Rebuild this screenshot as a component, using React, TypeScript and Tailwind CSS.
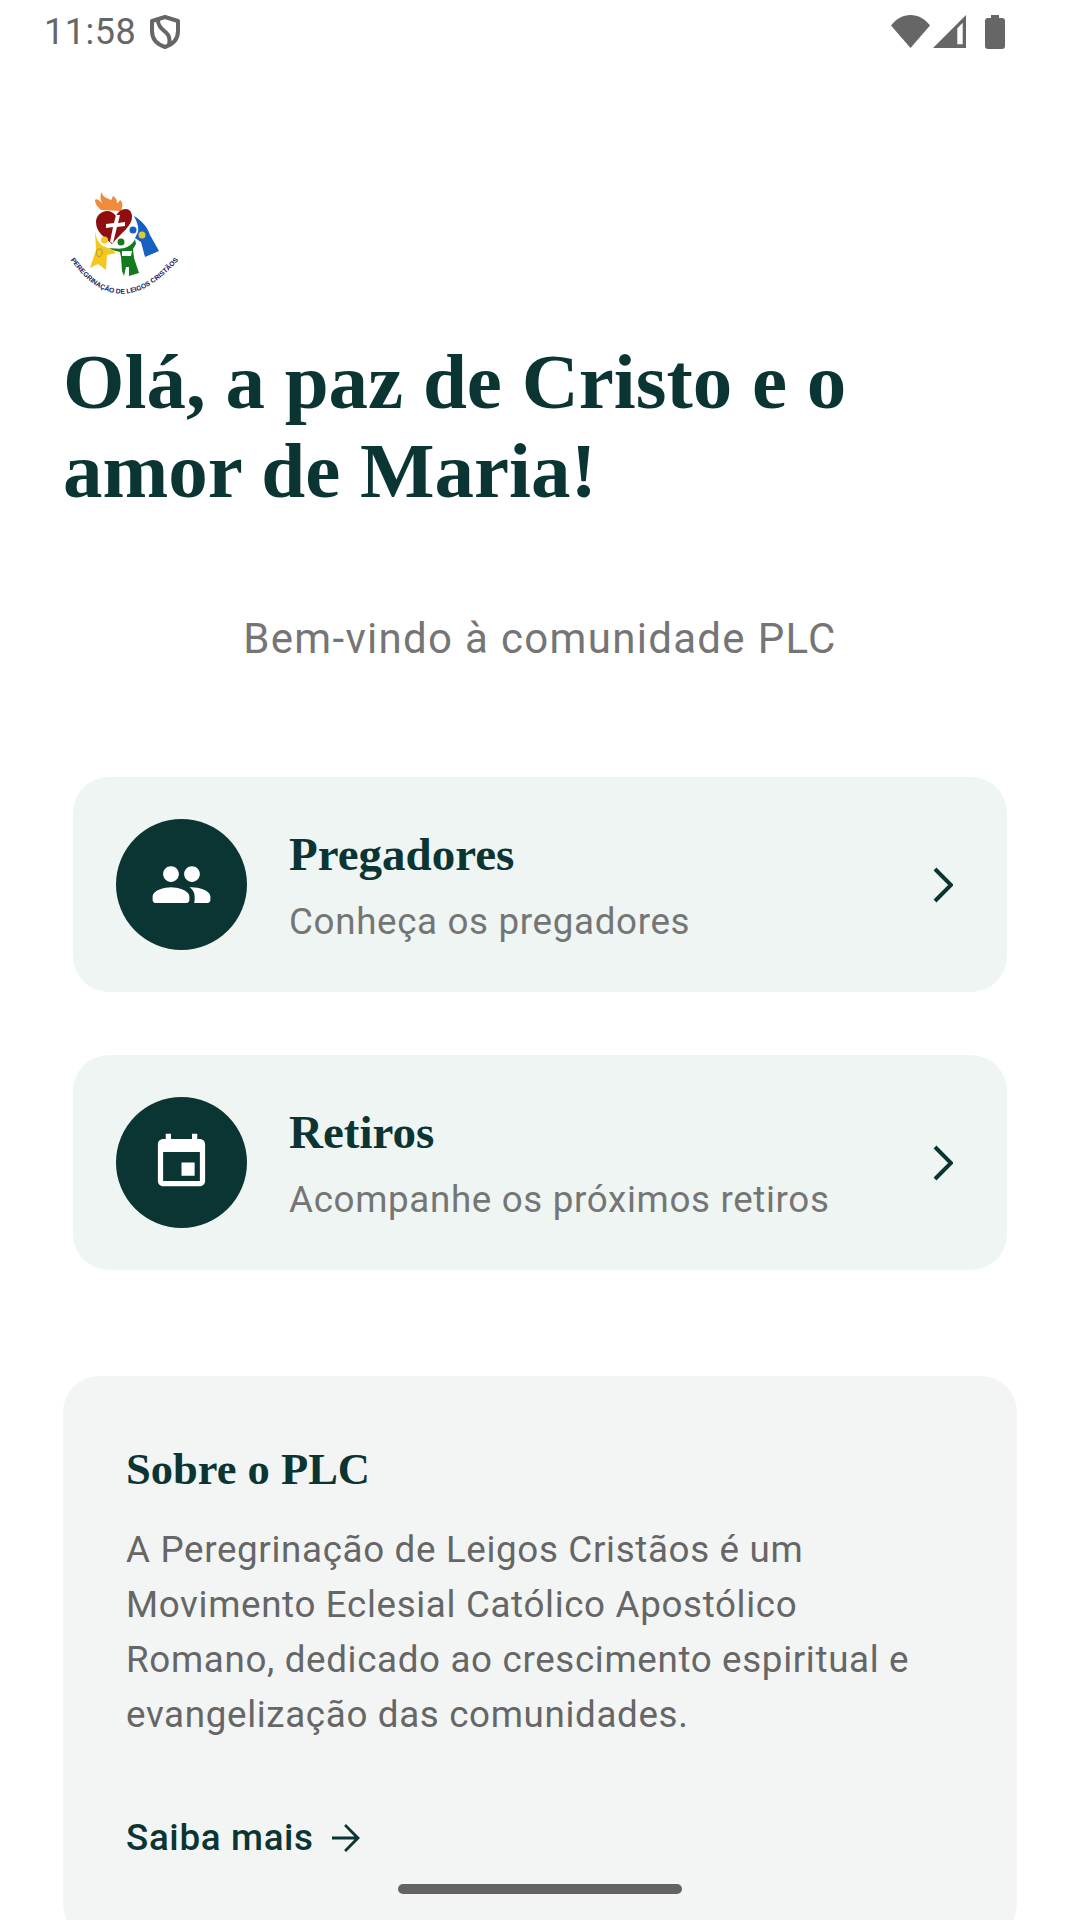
const roboto = 'font-[Roboto,sans-serif]';
const serif = "font-['Liberation_Serif',serif]";

function StatusBar() {
  return (
    <div className={`flex h-[63px] items-center justify-between pl-[44px] pr-[75px] text-[#666666] ${roboto}`}>
      <div className="flex items-center gap-[14px]">
        <span className="text-[36px] leading-none tracking-[0.5px]">11:58</span>
        <svg width="30" height="34" viewBox="0 0 30 34" fill="none" stroke="#666666" strokeWidth="4">
          <path d="M15 2 28 6V16C28 24 22.500 29.500 15 32 7.500 29.500 2 24 2 16V6Z" strokeLinejoin="round" />
          <path d="M8 4C7.500 11 12 14 15.500 17 19 20 20.500 24 19 30" />
        </svg>
      </div>
      <div className="flex items-center">
        <svg width="39" height="33" viewBox="0 0 39 33">
          <path d="M19.500 33 0 10.500C5 4 12 0 19.500 0S34 4 39 10.500Z" fill="#666666" />
        </svg>
        <svg width="33" height="33" viewBox="0 0 33 33" className="ml-[3px] mr-[19px]">
          <path fillRule="evenodd" d="M0 33 33 0V33ZM24.300 13.300V29.300H29.700V7.700Z" fill="#666666" />
        </svg>
        <svg width="20" height="34" viewBox="0 0 20 34">
          <path d="M6 0h8v3h3q3 0 3 3v25q0 3-3 3H3q-3 0-3-3V6q0-3 3-3h3Z" fill="#666666" />
        </svg>
      </div>
    </div>
  );
}

function Logo() {
  return (
    <svg width="125" height="125" viewBox="0 0 125 125" className="-ml-[3px] block">
      <defs>
        <path id="logoCurve" d="M10 79Q60 150 122 76" fill="none" />
      </defs>
      {/* flame */}
      <path d="M42 12c-3 5-1 8 0 11-3-3-6-5-7-3 0 4 3 7 6 10l20 1c2-5 2-9-1-11-1 2-2 3-3 3 0-4-2-6-4-7-1 2-1 3-2 4-4-2-9-3-9-8Z" fill="#f08a3c" />
      {/* heart */}
      <path d="M52 64C44 57 36 52 36 42c0-6 5-11 11-11 4 0 7 2 9 5 2-4 5-7 10-7 4 0 6 4 6 8 0 9-10 15-20 27Z" fill="#8f0f10" />
      <path d="M56 35h4l-2 8 7-1v4l-8 1-4 16-3-1 3-15-7 1v-4l8-1Z" fill="#ffffff" />
      {/* yellow figure */}
      <circle cx="44.500" cy="60" r="3.500" fill="#f5c61e" />
      <path d="M35 50c1 8 3 13 8 16l10 4 3 3-9 2-1 15-8-6-8 4 6-18Z" fill="#f5c61e" />
      <path d="M37 70c2-2 5-1 5 1 1 3-1 5-3 6-3-2-3-5-2-7Z" fill="none" stroke="#9a8a40" strokeWidth="0.800" />
      {/* green figure */}
      <circle cx="61" cy="62" r="3.500" fill="#137a1d" />
      <path d="M49 68c9 1 14 1 18-1 4-2 6-4 8-8l1 5-3 5 1 9 5 15-10 3 0-9-3 0-2 9-2-5-1-14-1-5c-4-1-8-2-11-4Z" fill="#137a1d" />
      <path d="M62 71 72 71 71 76 62 76Z" fill="#ffffff" />
      {/* blue figure */}
      <circle cx="73" cy="50" r="3.500" fill="#1560c0" />
      <path d="M74 36c7 4 13 10 16 19l9 16-14 6-4-15-6-4 3-6c1-5-1-10-4-16Z" fill="#1560c0" />
      <circle cx="82" cy="55" r="3.500" fill="#e0c832" />
      <text fontFamily="'Liberation Sans',sans-serif" fontSize="6.800" fontWeight="700" fill="#14185e">
        <textPath href="#logoCurve" startOffset="1">PEREGRINAÇÃO DE LEIGOS CRISTÃOS</textPath>
      </text>
    </svg>
  );
}

function MenuCard({ icon, title, subtitle }: { icon: React.ReactNode; title: string; subtitle: string }) {
  return (
    <div className="flex h-[215px] items-center rounded-[36px] bg-[#eff5f3] pl-[43px] pr-[54px]">
      <div className="flex h-[131px] w-[131px] shrink-0 items-center justify-center rounded-full bg-[#0a3533]">
        {icon}
      </div>
      <div className="ml-[42px] flex-1">
        <div className={`text-[47px] font-bold leading-[50px] text-[#0a3533] ${serif}`}>{title}</div>
        <div className={`mt-[24px] text-[36.750px] leading-[38px] tracking-[0.656px] text-[#757575] ${roboto}`}>{subtitle}</div>
      </div>
      <svg width="20" height="36" viewBox="0 0 20 36" fill="none" stroke="#0a3533" strokeWidth="4">
        <path d="M2 2 18 18 2 34" />
      </svg>
    </div>
  );
}

export default function App() {
  return (
    <div className="relative h-[1920px] w-[1080px] overflow-hidden bg-white">
      <StatusBar />
      <div className="pl-[63px] pt-[117px]">
        <Logo />
        <h1 className={`mt-[32px] text-[79px] font-bold leading-[89px] text-[#0a3533] ${serif}`}>
          Olá, a paz de Cristo e o
          <br />
          amor de Maria!
        </h1>
      </div>
      <div className={`mt-[100px] text-center text-[42px] leading-[48px] tracking-[1.312px] text-[#757575] ${roboto}`}>
        Bem-vindo à comunidade PLC
      </div>
      <div className="mt-[114px] flex flex-col gap-[63px] px-[73px]">
        <MenuCard
          title="Pregadores"
          subtitle="Conheça os pregadores"
          icon={
            <svg width="63" height="63" viewBox="0 0 24 24" fill="#ffffff">
              <path d="M16 11c1.660 0 3-1.340 3-3s-1.340-3-3-3-3 1.340-3 3 1.340 3 3 3zm-8 0c1.660 0 3-1.340 3-3S9.660 5 8 5 5 6.340 5 8s1.340 3 3 3zm0 2c-2.330 0-7 1.170-7 3.500V18c0 .550.450 1 1 1h12c.550 0 1-.450 1-1v-1.500c0-2.330-4.670-3.500-7-3.500zm8 0c-.290 0-.620.020-.970.050.020.010.030.030.040.040 1.140.830 1.930 1.940 1.930 3.410V18c0 .350-.070.690-.180 1H22c.550 0 1-.450 1-1v-1.500c0-2.330-4.670-3.500-7-3.500z" />
            </svg>
          }
        />
        <MenuCard
          title="Retiros"
          subtitle="Acompanhe os próximos retiros"
          icon={
            <svg width="63" height="63" viewBox="0 0 24 24" fill="#ffffff">
              <path d="M17 12h-5v5h5v-5zM16 1v2H8V1H6v2H5c-1.110 0-1.990.900-1.990 2L3 19c0 1.100.890 2 2 2h14c1.100 0 2-.900 2-2V5c0-1.100-.900-2-2-2h-1V1h-2zm3 18H5V8h14v11z" />
            </svg>
          }
        />
      </div>
      <div className="mx-[63px] mt-[106px] rounded-[36px] bg-[#f3f5f4] px-[63px] pb-[80px] pt-[66px]">
        <h2 className={`text-[44.500px] font-bold leading-[54px] text-[#0a3533] ${serif}`}>Sobre o PLC</h2>
        <p className={`mt-[26px] text-[36.750px] leading-[55.100px] tracking-[0.656px] text-[#666666] ${roboto}`}>
          A Peregrinação de Leigos Cristãos é um Movimento Eclesial Católico Apostólico Romano, dedicado ao crescimento espiritual e evangelização das comunidades.
        </p>
        <div className={`mt-[74px] flex items-center gap-[11px] text-[36.750px] font-medium leading-[44px] tracking-[0.656px] text-[#0a3533] ${roboto}`}>
          Saiba mais
          <svg width="42" height="42" viewBox="0 0 24 24" fill="#0a3533">
            <path d="M12 4l-1.100 1.100L16.800 11.200H4v1.600h12.800l-5.900 6.100L12 20l8-8z" />
          </svg>
        </div>
      </div>
      <div className="absolute bottom-[26px] left-[398px] h-[10px] w-[284px] rounded-full bg-[#636462]" />
    </div>
  );
}
